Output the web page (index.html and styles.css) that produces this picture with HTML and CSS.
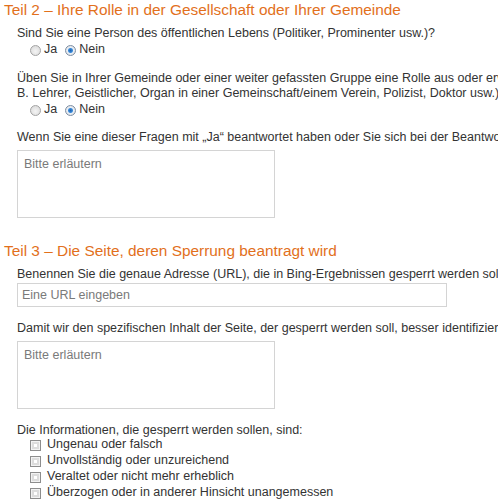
FILE: index.html
```html
<!DOCTYPE html>
<html lang="de">
  <head>
    <meta charset="UTF-8" />
    <meta name="viewport" content="width=device-width, initial-scale=1.0" />
    <title>Antrag auf Sperrung</title>
    <link rel="stylesheet" href="styles.css">
  </head>
  <body>
    <form class="request-form">
      <h2 class="section-title">Teil 2 – Ihre Rolle in der Gesellschaft oder Ihrer Gemeinde</h2>
      <div class="section-body">
        <div class="question">
          <p class="question-text">Sind Sie eine Person des öffentlichen Lebens (Politiker, Prominenter usw.)?</p>
          <div class="choices">
            <label class="choice"><input type="radio" name="public" /> Ja</label>
            <label class="choice"><input type="radio" name="public" checked /> Nein</label>
          </div>
        </div>

        <div class="question question-tight">
          <p class="question-text">Üben Sie in Ihrer Gemeinde oder einer weiter gefassten Gruppe eine Rolle aus oder erwarten Sie, dies künftig zu tun (z.<br />B. Lehrer, Geistlicher, Organ in einer Gemeinschaft/einem Verein, Polizist, Doktor usw.)?</p>
          <div class="choices">
            <label class="choice"><input type="radio" name="role" /> Ja</label>
            <label class="choice"><input type="radio" name="role" checked /> Nein</label>
          </div>
        </div>

        <div class="question">
          <p class="question-text">Wenn Sie eine dieser Fragen mit „Ja“ beantwortet haben oder Sie sich bei der Beantwortung nicht sicher sind, erläutern Sie dies bitte.</p>
          <textarea class="text-box" placeholder="Bitte erläutern"></textarea>
        </div>
      </div>

      <h2 class="section-title">Teil 3 – Die Seite, deren Sperrung beantragt wird</h2>
      <div class="section-body">
        <div class="question">
          <p class="question-text">Benennen Sie die genaue Adresse (URL), die in Bing-Ergebnissen gesperrt werden soll.</p>
          <input class="url-input" type="text" placeholder="Eine URL eingeben" />
        </div>

        <div class="question">
          <p class="question-text">Damit wir den spezifischen Inhalt der Seite, der gesperrt werden soll, besser identifizieren können, beschreiben Sie ihn bitte.</p>
          <textarea class="text-box" placeholder="Bitte erläutern"></textarea>
        </div>

        <div class="question">
          <p class="question-text">Die Informationen, die gesperrt werden sollen, sind:</p>
          <ul class="check-list">
            <li><label><input type="checkbox" /> Ungenau oder falsch</label></li>
            <li><label><input type="checkbox" /> Unvollständig oder unzureichend</label></li>
            <li><label><input type="checkbox" /> Veraltet oder nicht mehr erheblich</label></li>
            <li><label><input type="checkbox" /> Überzogen oder in anderer Hinsicht unangemessen</label></li>
          </ul>
        </div>
      </div>
    </form>
  </body>
</html>
```

FILE: styles.css
```css
body {
  font-family: "Liberation Sans", Arial, sans-serif;
  font-size: 12.5px;
  line-height: 15px;
  color: #333;
  background-color: #fff;
  margin: 0;
  padding: 0 4px;
  overflow: hidden;
}

.section-title {
  font-size: 15.4px;
  font-weight: normal;
  line-height: 20px;
  color: #e2701c;
  margin: 0;
  white-space: nowrap;
}

.section-body {
  padding-left: 13px;
  margin-bottom: 23px;
}

.question {
  margin-top: 6px;
  margin-bottom: 14px;
}

.question-tight {
  margin-bottom: 13px;
}

.question-text {
  margin: 0;
  white-space: nowrap;
}

.choices {
  display: flex;
  gap: 8px;
  padding-left: 13px;
  margin-top: 1px;
}

.choice {
  display: flex;
  align-items: center;
  gap: 3px;
}

input[type="radio"] {
  appearance: none;
  width: 11px;
  height: 11px;
  margin: 2px 0 0;
  border: 1px solid #a3a3a3;
  border-radius: 50%;
  background: radial-gradient(circle at 50% 60%, #f4f4f4, #d6d6d6);
}

input[type="radio"]:checked {
  background: radial-gradient(circle, #1f63b4 0, #3a8ad8 2px, #e9eef4 3px, #dcdcdc 100%);
  border-color: #7d8ea3;
}

.text-box {
  display: block;
  box-sizing: border-box;
  width: 258px;
  height: 68px;
  margin-top: 5px;
  padding: 6px 6px;
  border: 1px solid #d4d4d4;
  font-family: inherit;
  font-size: 12.5px;
  line-height: 15px;
  resize: none;
}

.url-input {
  display: block;
  box-sizing: border-box;
  width: 430px;
  height: 24px;
  margin-top: 1px;
  padding: 0 4px;
  border: 1px solid #d4d4d4;
  font-family: inherit;
  font-size: 12.5px;
}

::placeholder {
  color: #7a7a7a;
}

.check-list {
  list-style: none;
  margin: -1px 0 0;
  padding-left: 13px;
}

.check-list li {
  height: 16px;
}

.check-list label {
  display: flex;
  align-items: center;
  gap: 6px;
}

input[type="checkbox"] {
  appearance: none;
  width: 11px;
  height: 11px;
  margin: 1px 0 0;
  border: 1px solid #8d8d8d;
  background: #fff;
  box-shadow: inset 0 0 0 1px #f2f2f2, inset 0 0 0 3px #dcdcdc;
}
```
